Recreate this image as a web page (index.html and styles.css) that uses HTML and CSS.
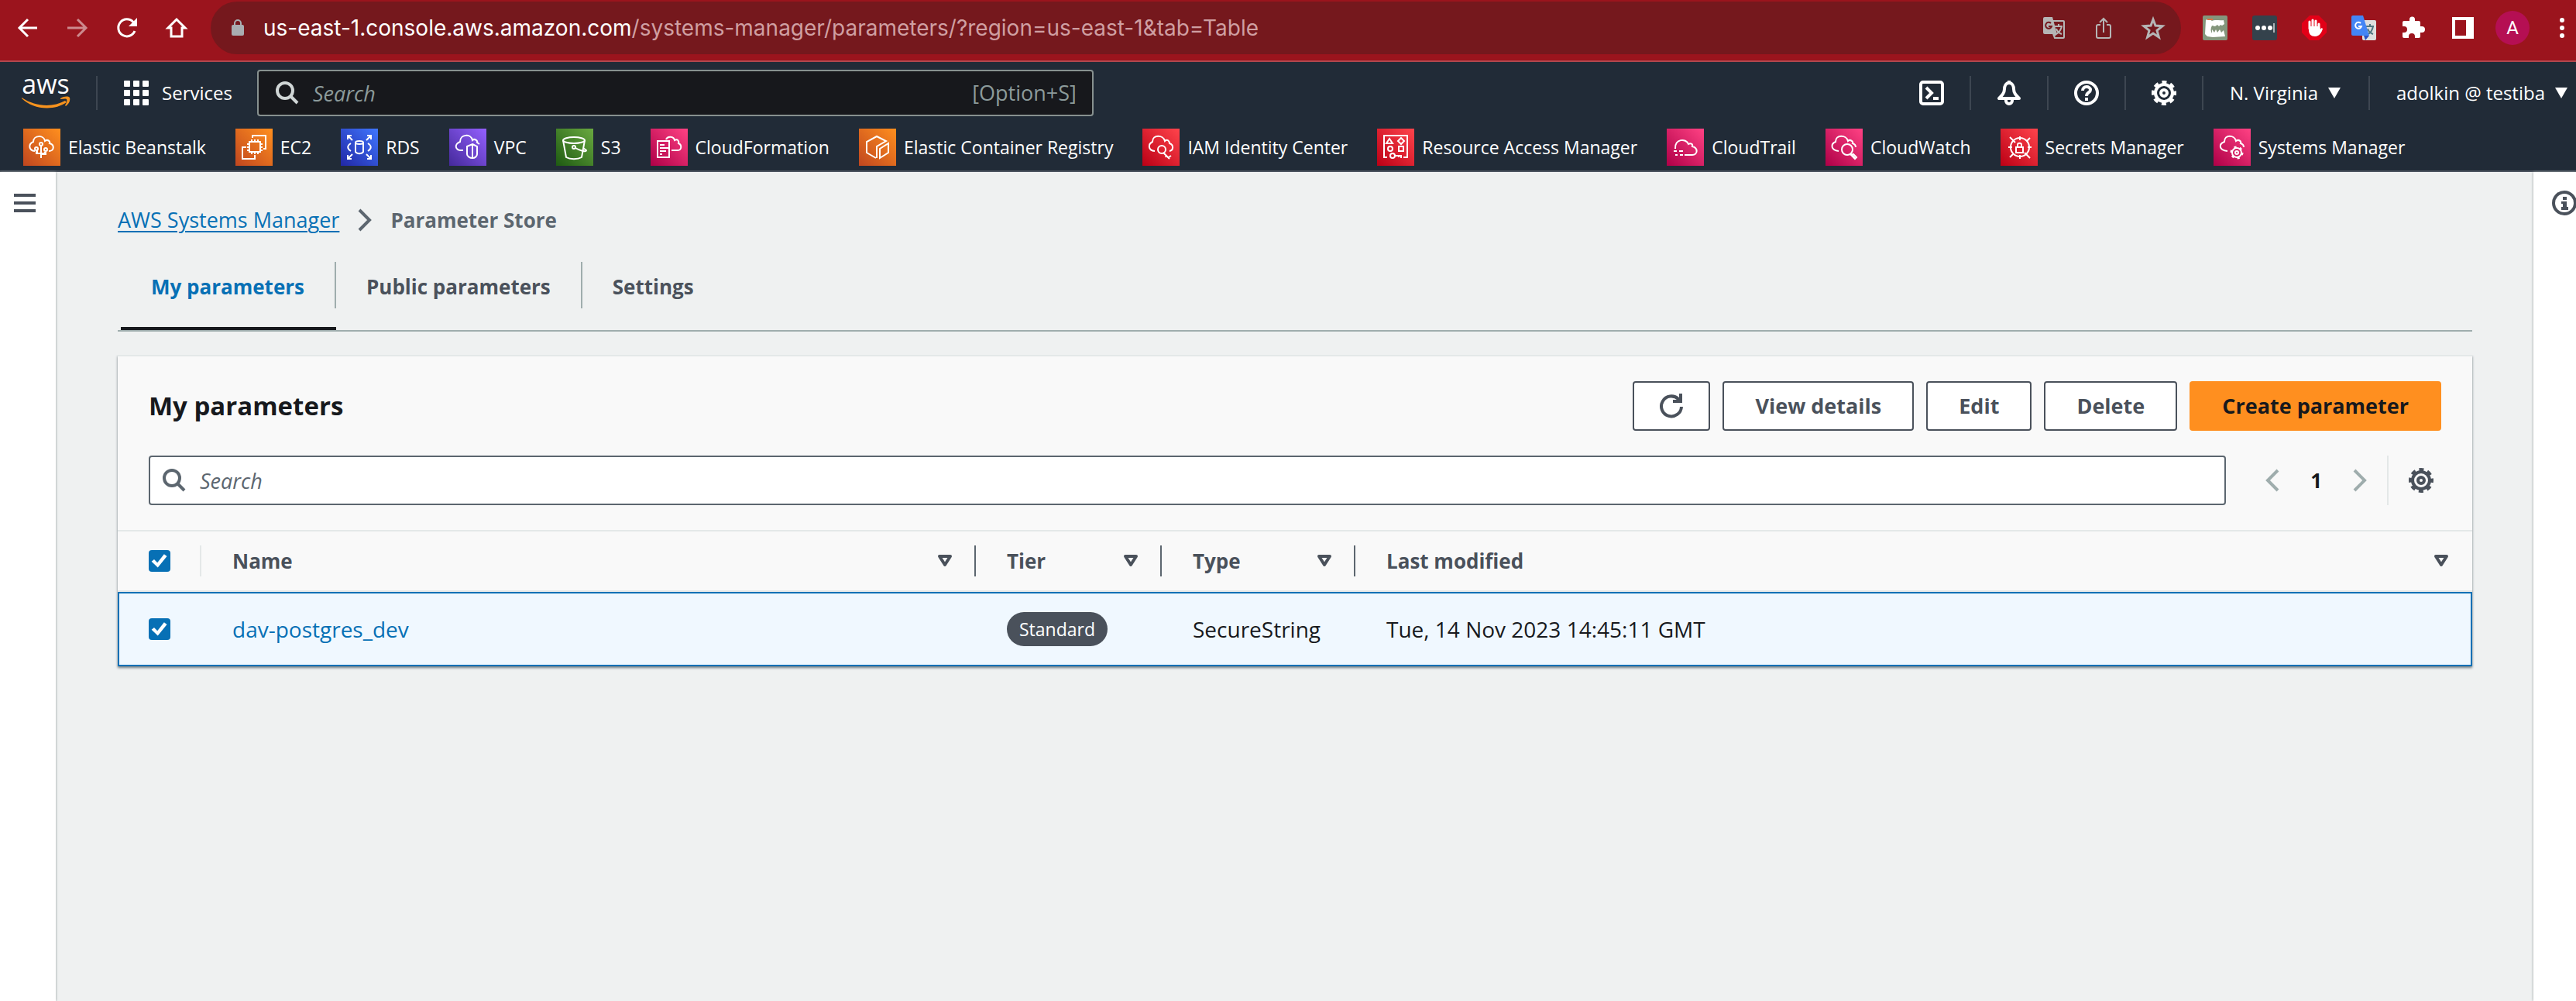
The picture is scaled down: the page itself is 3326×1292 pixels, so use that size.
FILE: index.html
```
<!DOCTYPE html>
<html lang="en">
<head>
<meta charset="utf-8">
<title>Parameter Store</title>
<link rel="stylesheet" href="styles.css">
</head>
<body>
<svg class="sprite" aria-hidden="true">
  <symbol id="gear" viewBox="0 0 32 32"><g fill="none" stroke="currentColor"><circle cx="16" cy="16" r="11" stroke-width="4"/><circle cx="16" cy="16" r="14" stroke-width="4" stroke-dasharray="6 4.995" stroke-dashoffset="3"/><circle cx="16" cy="16" r="4" stroke-width="4"/></g></symbol>
  <symbol id="glass" viewBox="0 0 30 30"><g fill="none" stroke="currentColor" stroke-width="4"><circle cx="12" cy="12" r="10"/><path d="M19 19l9 9"/></g></symbol>
  <symbol id="sort" viewBox="0 0 20 16"><path d="M3 2h14l-7 11z" fill="none" stroke="currentColor" stroke-width="4" stroke-linejoin="round"/></symbol>
  <symbol id="prev" viewBox="0 0 18 30"><path d="M16 2L3 15l13 13" fill="none" stroke="currentColor" stroke-width="4"/></symbol>
  <symbol id="next" viewBox="0 0 18 30"><path d="M2 2l13 13L2 28" fill="none" stroke="currentColor" stroke-width="4"/></symbol>
</svg>

<header class="browser">
  <nav class="browser-nav" aria-label="Browser">
    <button class="tool" aria-label="Back"><svg viewBox="0 0 32 32"><path d="M28 16H6M16 5L5 16l11 11" fill="none" stroke="#fff" stroke-width="3"/></svg></button>
    <button class="tool faded" aria-label="Forward"><svg viewBox="0 0 32 32"><path d="M3 16h23M16 5l11 11-11 11" fill="none" stroke="#fff" stroke-width="3"/></svg></button>
    <button class="tool" aria-label="Reload"><svg viewBox="0 0 32 32"><path d="M26 20A11 11 0 1 1 24 8.500" fill="none" stroke="#fff" stroke-width="3"/><path d="M29 3v11H18z" fill="#fff"/></svg></button>
    <button class="tool" aria-label="Home"><svg viewBox="0 0 32 32"><path d="M16 5L5 16h4v11h14V16h4z" fill="none" stroke="#fff" stroke-width="3"/></svg></button>
  </nav>
  <div class="address">
    <svg class="lock" viewBox="0 0 18 24"><path d="M5 9V6a4 4 0 0 1 8 0v3" fill="none" stroke="#a9adb1" stroke-width="2"/><rect x="1" y="8" width="16" height="14" rx="2" fill="#a9adb1"/></svg>
    <div class="url" role="textbox" aria-label="Address">us-east-1.console.aws.amazon.com<span>/systems-manager/parameters/?region=us-east-1&amp;tab=Table</span></div>
    <button class="tool" aria-label="Translate page"><svg viewBox="0 0 32 32"><path d="M4 2h10l6 22-3 3-2-3H4a2 2 0 0 1-2-2V4a2 2 0 0 1 2-2z" fill="#b5b5b5"/><path d="M14 7h14a1 1 0 0 1 1 1v20a1 1 0 0 1-1 1H17l-2-5" fill="none" stroke="#b5b5b5" stroke-width="2"/><path d="M12 10a4 4 0 1 0 1 4H9" fill="none" stroke="#75181d" stroke-width="2"/><path d="M17 14h10M22 11v3M26 14c-1 5-4 8-7 10M19 17c1 3 4 6 7 7" fill="none" stroke="#b5b5b5" stroke-width="2"/></svg></button>
    <button class="tool" aria-label="Share"><svg viewBox="0 0 32 32"><path d="M12 12H9a2 2 0 0 0-2 2v13a2 2 0 0 0 2 2h14a2 2 0 0 0 2-2V14a2 2 0 0 0-2-2h-3M16 22V4M11 9l5-5 5 5" fill="none" stroke="#b5b5b5" stroke-width="2"/></svg></button>
    <button class="tool" aria-label="Bookmark"><svg viewBox="0 0 32 32"><path d="M16 5l3 8 9 .700-7 5.600 2.400 8.700L16 23l-7.400 5L11 19.300 4 13.700l9-.700z" fill="none" stroke="#b5b5b5" stroke-width="3"/></svg></button>
  </div>
  <div class="extensions">
    <button class="tool" aria-label="Capture extension"><svg viewBox="0 0 32 32"><rect width="32" height="32" rx="2" fill="#84967c"/><path d="M4 6c2-2 6-1 8 1 4-2 10 0 15-1l1 5-3 2-2-1-2 2-2-2-3 2-4-1c-2 4-2 7 0 10v-5l3 4 2-4 2 4 3-4 2 4 3-3 2 8-16 1-7-1-3-3z" fill="#fff"/><path d="M6 5h7" stroke="#df7347" stroke-width="2"/></svg></button>
    <button class="tool" aria-label="Password extension"><svg viewBox="0 0 32 32"><rect width="32" height="32" rx="3" fill="#34424c"/><g fill="#fff"><circle cx="7" cy="16" r="3"/><circle cx="15" cy="16" r="3"/><circle cx="23" cy="16" r="3"/><path d="M27 10h2v12h-2z" opacity=".6"/></g></svg></button>
    <button class="tool" aria-label="Ad blocker"><svg viewBox="0 0 32 32"><path d="M10 0h12l10 10v12L22 32H10L0 22V10z" fill="#e30017"/><path d="M10 17V8M14 16V6M18 16V7M22 17v-6" stroke="#fff" stroke-width="3" stroke-linecap="round"/><path d="M9 14h14l1 4c1-2 2-2 3-1-1 4-4 10-10 10-5 0-8-3-8-8z" fill="#fff"/></svg></button>
    <button class="tool" aria-label="Google Translate"><svg viewBox="0 0 32 32"><rect x="14" y="6" width="18" height="26" rx="2" fill="#dedede"/><path d="M18 14h11M24 11v3M28 14c-1 5-4 9-7 10M21 17c1 3 4 6 7 7" fill="none" stroke="#4f7680" stroke-width="2"/><path d="M16 26h7l-5 6z" fill="#2a54c4"/><path d="M2 0h13l8 26H2a2 2 0 0 1-2-2V2a2 2 0 0 1 2-2z" fill="#4385f5"/><path d="M12 10a4 4 0 1 0 1 4H9" fill="none" stroke="#fff" stroke-width="2"/></svg></button>
    <button class="tool" aria-label="Extensions"><svg viewBox="0 0 32 32"><path d="M4 7h7V5a3.500 3.500 0 0 1 7 0v2h5a2 2 0 0 1 2 2v5h2a4 4 0 0 1 0 8h-2v5a2 2 0 0 1-2 2h-5v-2a4 4 0 0 0-8 0v2H4a2 2 0 0 1-2-2v-5h2a4 4 0 0 0 0-8H2V9a2 2 0 0 1 2-2z" fill="#fff"/></svg></button>
    <button class="tool" aria-label="Side panel"><svg viewBox="0 0 32 32"><path d="M2 2h28v28H2zM6 6v20h14V6z" fill="#fff" fill-rule="evenodd"/></svg></button>
  </div>
  <button class="avatar" aria-label="Profile">A</button>
  <button class="tool" aria-label="Browser menu"><svg viewBox="0 0 32 32" fill="#fff"><circle cx="16" cy="6" r="3"/><circle cx="16" cy="16" r="3"/><circle cx="16" cy="26" r="3"/></svg></button>
</header>

<header class="console">
  <div class="console-bar">
    <a class="logo" href="#" aria-label="AWS home"><span>aws</span><svg viewBox="0 0 66 18"><path d="M1 2c18 12 40 13 56 4l2 2C42 20 15 17 1 3z" fill="#f7931e"/><path d="M51 3c5-3 10-3 12-1 1 4-1 8-5 11l-1-1c2-3 3-6 2-8-2-1-5 0-8 0z" fill="#f7931e"/></svg></a>
    <button class="services"><svg viewBox="0 0 32 32" fill="#fff"><g id="dots"><rect width="8" height="8" rx="1"/><rect x="12" width="8" height="8" rx="1"/><rect x="24" width="8" height="8" rx="1"/></g><use href="#dots" y="12"/><use href="#dots" y="24"/></svg>Services</button>
    <label class="console-search"><svg><use href="#glass"/></svg><input type="search" placeholder="Search" aria-label="Search services"><span>[Option+S]</span></label>
    <div class="console-tools">
      <button class="console-icon" aria-label="CloudShell"><svg viewBox="0 0 32 32"><rect x="2" y="2" width="28" height="28" rx="3" fill="none" stroke="#fff" stroke-width="4"/><path d="M9 9l7 7-7 7" fill="none" stroke="#fff" stroke-width="4"/><path d="M18 21h7v4h-7z" fill="#fff"/></svg></button>
      <button class="console-icon" aria-label="Notifications"><svg viewBox="0 0 32 32"><path d="M16 3c-4 0-6 4-6 8 0 5-3 8-7 12h26c-4-4-7-7-7-12 0-4-2-8-6-8z" fill="none" stroke="#fff" stroke-width="4" stroke-linejoin="round"/><path d="M12 23v3a4 4 0 0 0 8 0v-3M16 0v4" fill="none" stroke="#fff" stroke-width="4"/></svg></button>
      <button class="console-icon" aria-label="Help"><svg viewBox="0 0 32 32"><circle cx="16" cy="16" r="14" fill="none" stroke="#fff" stroke-width="4"/><path d="M11 13c0-7 10-6 10-1 0 4-5 3-5 8" fill="none" stroke="#fff" stroke-width="4"/><path d="M14 22h4v4h-4z" fill="#fff"/></svg></button>
      <button class="console-icon" aria-label="Settings"><svg><use href="#gear"/></svg></button>
      <button class="console-menu region">N. Virginia<i class="caret"></i></button>
      <button class="console-menu">adolkin @ testiba<i class="caret"></i></button>
    </div>
  </div>
  <nav class="favourites" aria-label="Favourites">
    <a href="#"><svg class="orange" viewBox="0 0 48 48"><path d="M15 29c-8-1-9-9-2-12 0-9 14-9 15-1 4-3 7 1 6 3 7 2 6 10-1 10M23 38V21M18 27v5h10v-2M20 32h-3v-5M23 33h6v-3"/><circle cx="23" cy="20" r="2"/><circle cx="17" cy="26" r="2"/><circle cx="29" cy="27" r="2"/></svg>Elastic Beanstalk</a>
    <a href="#"><svg class="orange" viewBox="0 0 48 48"><path d="M18 17h14v13H18zM21 14v3M25 14v3M29 14v3M21 30v3M25 30v3M29 30v3M15 20h3M15 24h3M15 28h3M32 20h3M32 24h3M32 28h3M22 12V9h17v17h-3M14 24H9v15h16v-5"/></svg>EC2</a>
    <a href="#"><svg class="blue" viewBox="0 0 48 48"><path d="M9 14V9h5M9 9l6 6M34 9h5v5M39 9l-6 6M9 34v5h5M9 39l6-6M39 34v5h-5M39 39l-6-6M13 19c-5 3-5 7 0 10M35 19c5 3 5 7 0 10M19 18v12c2 3 8 3 10 0V18"/><ellipse cx="24" cy="18" rx="5" ry="2"/></svg>RDS</a>
    <a href="#"><svg class="violet" viewBox="0 0 48 48"><path d="M18 28c-11 1-12-8-4-11 0-10 14-11 16-2 3-3 7 1 6 3l3 2M30 20l6 3v10c0 3-3 5-6 5s-7-2-7-5V23zM30 20v18"/></svg>VPC</a>
    <a href="#"><svg class="green" viewBox="0 0 48 48"><ellipse cx="23" cy="15" rx="14" ry="4"/><path d="M9 15l4 22c5 3 15 3 20 0l4-22M25 25c5 3 14 6 14 3l-4-3"/><circle cx="23" cy="24" r="2"/></svg>S3</a>
    <a href="#"><svg class="pink" viewBox="0 0 48 48"><path d="M9 16h15v21H9zM12 21h6M12 25h11M12 29h8M12 33h3M20 14c2-5 10-4 11 1 4-2 6 1 5 4 5 2 4 9-1 9h-8"/></svg>CloudFormation</a>
    <a href="#"><svg class="orange" viewBox="0 0 48 48"><path d="M22 38l-12-7V17l13-7 12 6-12 7v15M27 38V26l11-7v12z"/></svg>Elastic Container Registry</a>
    <a href="#"><svg class="red" viewBox="0 0 48 48"><path d="M16 29c-9-1-9-9-3-12 0-10 14-9 16-1 3-3 6 0 6 3 6 2 5 9 0 10M27 31l8 8M31 34l-1 3M34 37l3-2"/><circle cx="25" cy="27" r="5"/></svg>IAM Identity Center</a>
    <a href="#"><svg class="red" viewBox="0 0 48 48"><path d="M13 37H9V9h30v28h-5M16 13l4 6h-8zM31 12l4 4-4 4-4-4zM28 23h6v6h-6zM22 35h9v3M28 35v2"/><circle cx="17" cy="26" r="3"/><circle cx="20" cy="35" r="3"/></svg>Resource Access Manager</a>
    <a href="#"><svg class="pink" viewBox="0 0 48 48"><path d="M11 26c-1-13 14-14 17-6 3-2 6 0 5 3 8 2 7 11 0 11H23M9 29h4M16 29h5M11 34h3M17 34h4"/></svg>CloudTrail</a>
    <a href="#"><svg class="pink" viewBox="0 0 48 48"><path d="M17 29c-10-1-11-9-4-12 0-10 14-9 16-1 3-3 7 1 6 3 3 1 4 3 4 5M33 33l5 5"/><circle cx="28" cy="27" r="7"/><path d="M33 34l3-1 4 4-2 2z"/></svg>CloudWatch</a>
    <a href="#"><svg class="red" viewBox="0 0 48 48"><circle cx="25" cy="24" r="12"/><path d="M12 11l7 7M38 12l-4 4M12 37l4-4M38 38l-7-7M25 10v5M25 34v5M10 24h5M35 24h5M20 24h9v7h-9zM22 24v-3c0-3 5-3 5 0v3"/></svg>Secrets Manager</a>
    <a href="#"><svg class="pink" viewBox="0 0 48 48"><path d="M18 29c-11-1-12-9-4-12 0-10 13-9 15-1 4-3 7 1 6 3 3 1 4 2 4 5"/><circle cx="30" cy="31" r="6"/><circle cx="30" cy="31" r="2"/><circle cx="30" cy="31" r="7" stroke-width="3" stroke-dasharray="3 4.330"/></svg>Systems Manager</a>
  </nav>
</header>

<div class="shell">
  <aside class="rail"><button class="hamburger" aria-label="Open navigation"><svg viewBox="0 0 28 24"><path d="M0 2h28M0 12h28M0 22h28" stroke="#4a515b" stroke-width="4"/></svg></button></aside>
  <main>
    <nav class="breadcrumbs" aria-label="Breadcrumb"><a href="#">AWS Systems Manager</a><svg><use href="#next"/></svg><strong>Parameter Store</strong></nav>
    <div class="tabs" role="tablist">
      <button role="tab" aria-selected="true"><span>My parameters</span></button>
      <button role="tab" aria-selected="false"><span>Public parameters</span></button>
      <button role="tab" aria-selected="false"><span>Settings</span></button>
    </div>
    <section class="card">
      <div class="card-head">
        <h1>My parameters</h1>
        <div class="actions">
          <button class="btn icon-btn" aria-label="Refresh"><svg viewBox="0 0 32 32"><path d="M29 17A13 13 0 1 1 25 7l3 3" fill="none" stroke="#4a515b" stroke-width="4"/><path d="M30 0v12H18V8h8V0z" fill="#4a515b"/></svg></button>
          <button class="btn">View details</button>
          <button class="btn">Edit</button>
          <button class="btn">Delete</button>
          <button class="btn primary">Create parameter</button>
        </div>
      </div>
      <div class="filter">
        <label class="filter-search"><svg><use href="#glass"/></svg><input type="search" placeholder="Search" aria-label="Search parameters"></label>
        <div class="pager">
          <button aria-label="Previous page"><svg><use href="#prev"/></svg></button>
          <button class="page" aria-current="page">1</button>
          <button aria-label="Next page"><svg><use href="#next"/></svg></button>
        </div>
        <button class="prefs" aria-label="Preferences"><svg><use href="#gear"/></svg></button>
      </div>
      <table>
        <colgroup><col class="c-check"><col class="c-name"><col class="c-tier"><col class="c-type"><col></colgroup>
        <thead>
          <tr>
            <th class="check"><div class="th faint"><input type="checkbox" checked aria-label="Select all"></div></th>
            <th><div class="th">Name<svg><use href="#sort"/></svg></div></th>
            <th><div class="th">Tier<svg><use href="#sort"/></svg></div></th>
            <th><div class="th">Type<svg><use href="#sort"/></svg></div></th>
            <th><div class="th last">Last modified<svg><use href="#sort"/></svg></div></th>
          </tr>
        </thead>
        <tbody>
          <tr>
            <td class="check"><input type="checkbox" checked aria-label="Select dav-postgres_dev"></td>
            <td><a href="#">dav-postgres_dev</a></td>
            <td><span class="badge">Standard</span></td>
            <td>SecureString</td>
            <td>Tue, 14 Nov 2023 14:45:11 GMT</td>
          </tr>
        </tbody>
      </table>
    </section>
  </main>
  <aside class="info"><button aria-label="Info"><svg viewBox="0 0 32 32"><circle cx="16" cy="16" r="14" fill="none" stroke="#4a515b" stroke-width="4"/><path d="M14 8h5v4h-5zM12 14h7v7h2v4h-9v-4h2v-4h-2z" fill="#4a515b"/></svg></button></aside>
</div>
</body>
</html>
```
FILE: styles.css
```
* { box-sizing: border-box; }
body { margin: 0; min-height: 100vh; display: flex; flex-direction: column; overflow-x: hidden; background: #eff1f1; color: #17191d; font: 400 27px/36px "Open Sans", "Noto Sans", sans-serif; }
button { font: inherit; color: inherit; background: none; border: 0; padding: 0; margin: 0; cursor: pointer; white-space: nowrap; }
svg { display: block; flex: none; width: 32px; height: 32px; }
a { color: #0770b5; text-decoration: none; }
.sprite { position: absolute; width: 0; height: 0; }

/* Browser toolbar */
.browser { display: flex; align-items: center; height: 80px; padding: 0 2px 6px 20px; background: #9b141d; border-bottom: 2px solid #b2474e; }
.browser-nav, .extensions { display: flex; gap: 32px; }
.tool { width: 32px; height: 32px; flex: none; }
.faded { opacity: .5; }
.address { flex: 1; display: flex; align-items: center; gap: 32px; height: 68px; margin: 0 28px; padding: 0 20px 0 26px; border-radius: 34px; background: #75181d; }
.lock { width: 18px; height: 24px; }
.url { flex: 1; margin-left: -8px; color: #fff; font: 400 28px/36px "Inter", sans-serif; white-space: nowrap; }
.url span { color: #cf9fa2; }
.avatar { width: 44px; height: 44px; margin: 0 26px; border-radius: 50%; background: #b50f53; color: #fff; font: 400 24px/44px "Roboto", sans-serif; }

/* Console navigation */
.console { height: 142px; background: #212b37; border-bottom: 2px solid #4c545f; color: #fff; font-weight: 500; font-size: 24px; }
.console-bar { display: flex; align-items: center; height: 80px; }
.logo { display: flex; flex-direction: column; justify-content: flex-end; width: 126px; height: 44px; padding-left: 27px; border-right: 2px solid #3d4651; }
.logo span { width: 64px; color: #fff; font-size: 34px; line-height: 32px; text-align: center; }
.logo svg { width: 66px; height: 18px; }
.services { display: flex; align-items: center; gap: 17px; margin: 0 32px 0 34px; }
.console-search { display: flex; align-items: center; flex: none; width: 33%; max-width: 1080px; height: 60px; padding: 0 20px 0 22px; gap: 18px; border: 2px solid #87918f; border-radius: 4px; background: #17181c; color: #8c9b9b; font-size: 27px; }
.console-search svg, .filter-search svg { width: 30px; height: 30px; }
.console-search svg { color: #d0d6d6; }
input[type="search"] { flex: 1; min-width: 0; height: 40px; padding: 0; border: 0; outline: 0; background: none; color: inherit; font: inherit; appearance: none; }
input::placeholder { color: inherit; font-style: italic; opacity: 1; }
.console-tools { display: flex; align-items: center; margin-left: auto; }
.console-icon { display: flex; justify-content: center; width: 100px; height: 44px; align-items: center; border-right: 2px solid #3d4651; }
.console-menu { display: flex; align-items: center; gap: 13px; height: 44px; padding: 0 11px 0 34px; }
.region { padding-right: 36px; border-right: 2px solid #3d4651; }
.caret { width: 16px; height: 14px; background: #fff; clip-path: polygon(0 0, 100% 0, 50% 100%); }
.favourites { display: flex; align-items: center; gap: 38px; height: 60px; padding-left: 30px; font-size: 23px; }
.favourites a { display: flex; align-items: center; gap: 10px; color: #fff; white-space: nowrap; }
.favourites svg { width: 48px; height: 48px; fill: none; stroke: #fff; stroke-width: 2; }
.orange { background: linear-gradient(45deg, #c0461f, #ff8f1e); }
.blue { background: linear-gradient(45deg, #2127a5, #4077ff); }
.violet { background: linear-gradient(45deg, #44299a, #9460ff); }
.green { background: linear-gradient(45deg, #1e5a12, #6aa940); }
.pink { background: linear-gradient(45deg, #ae0047, #ff4284); }
.red { background: linear-gradient(45deg, #bb0015, #ff444c); }

/* Page frame */
.shell { flex: 1; display: grid; grid-template-columns: 72px minmax(0, 1fr) 55px; }
.rail, .info { background: #fff; box-shadow: 0 0 3px #8b9494; }
.rail button, .info button { display: block; }
.rail { padding: 28px 0 0 18px; }
.hamburger svg { width: 28px; height: 24px; }
.info { padding: 24px 0 0 24px; overflow: hidden; }
main { padding: 42px 79px 60px 80px; }
.breadcrumbs { display: flex; align-items: center; gap: 24px; height: 40px; }
.breadcrumbs a { text-decoration: underline; text-decoration-thickness: 2px; text-underline-offset: 4px; }
.breadcrumbs svg { width: 18px; height: 30px; color: #5c666f; }
.breadcrumbs strong { color: #5c666f; font-size: 26px; }

.tabs { display: flex; height: 104px; margin-top: 20px; border-bottom: 2px solid #9fadad; padding: 14px 0 0 4px; color: #4a515b; font-size: 26px; font-weight: 700; }
.tabs button { display: flex; border-bottom: 4px solid transparent; }
.tabs span { padding: 14px 39px 10px; height: 60px; border-right: 2px solid #9fadad; }
.tabs button:last-child span { border: 0; }
.tabs button[aria-selected="true"] { color: #0770b5; border-color: #17191d; }

.card { margin-top: 30px; border-top: 2px solid #e4e8e8; background: #f9f9f9; box-shadow: 0 2px 3px #6f7b80; clip-path: inset(0 -3px -6px -3px); }
.card-head { display: flex; justify-content: space-between; align-items: center; padding: 32px 40px 0; }
h1 { margin: 0; font-size: 33px; line-height: 44px; font-weight: 700; }
.actions { display: flex; gap: 16px; }
.btn { height: 64px; padding: 0 40px; border: 2px solid #4a515b; border-radius: 4px; background: #fff; color: #4a515b; font-weight: 700; }
.icon-btn { padding: 0 32px; }
.btn.primary { border-color: #ff8f1f; background: #ff8f1f; color: #17191d; }
.filter { display: flex; align-items: center; padding: 32px 40px; }
.filter-search { flex: 1; display: flex; align-items: center; gap: 18px; height: 64px; padding: 0 16px; border: 2px solid #5c666f; border-radius: 4px; background: #fff; color: #5c666f; }
.pager { display: flex; align-items: center; gap: 40px; margin: 0 26px 0 51px; color: #9fadad; }
.pager svg { width: 18px; height: 30px; }
.page { color: #17191d; font-weight: 700; font-size: 26px; }
.prefs { display: flex; align-items: center; height: 64px; padding: 0 10px 0 26px; border-left: 2px solid #e4e8e8; color: #4a515b; }

table { width: 100%; table-layout: fixed; border-collapse: separate; border-spacing: 0; border-top: 2px solid #e4e8e8; }
.c-check { width: 108px; }
.c-name { width: 1000px; }
.c-tier { width: 240px; }
.c-type { width: 250px; }
th { height: 78px; padding: 0; border-bottom: 2px solid #e4e8e8; color: #4a515b; font-size: 26px; font-weight: 700; text-align: left; }
.th { display: flex; align-items: center; justify-content: space-between; height: 40px; padding: 0 28px 0 40px; border-right: 2px solid #5c666f; }
.th svg { width: 20px; height: 16px; }
.th.faint { border-color: #e4e8e8; }
.th.last { border: 0; padding-right: 30px; }
td { height: 96px; padding: 0 0 0 40px; background: #f0f8ff; border: solid #0770b5; border-width: 2px 0; font-size: 28px; }
td:first-child { border-left-width: 2px; padding-left: 38px; }
td:last-child { border-right-width: 2px; }
input[type="checkbox"] { display: block; width: 28px; height: 28px; margin: 0; appearance: none; border-radius: 4px; background: #0770b5; }
input[type="checkbox"]::before { content: ""; display: block; width: 28px; height: 28px; background: #fff; clip-path: polygon(13% 53%, 25% 43%, 40% 58%, 71% 19%, 84% 29%, 42% 80%); }
.badge { display: inline-block; height: 44px; padding: 0 16px; border-radius: 22px; background: #4a515b; color: #fff; font-size: 23px; line-height: 44px; vertical-align: middle; }
```
